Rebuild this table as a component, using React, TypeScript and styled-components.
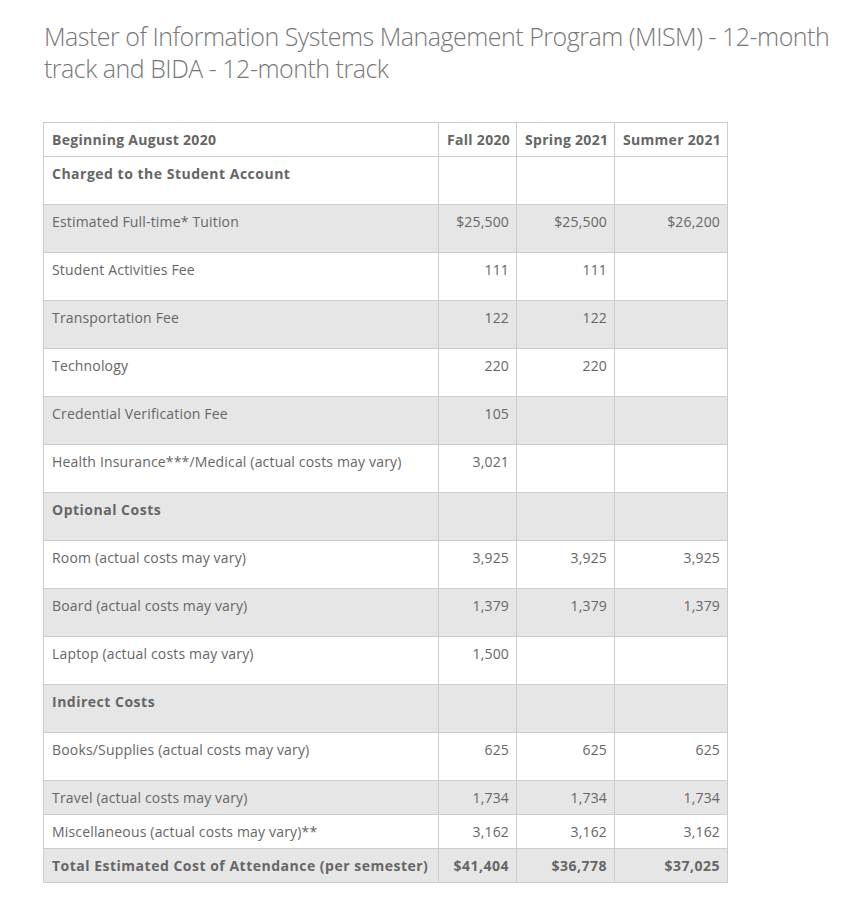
import React from "react";
import styled, { createGlobalStyle } from "styled-components";

const Global = createGlobalStyle`
  html, body { margin: 0; padding: 0; background: #fff; }
  body { font-family: "Open Sans", "Liberation Sans", sans-serif; color: #666; }
`;

const Page = styled.div`
  padding: 20px 0 0 43px;
  width: 800px;
`;

const Title = styled.h2`
  margin: 0 0 38px 1px;
  font-weight: 300;
  font-size: 25px;
  line-height: 32px;
  color: #777;
  letter-spacing: -0.5px;
`;

const Table = styled.table`
  border-collapse: collapse;
  table-layout: fixed;
  width: 685px;
  font-size: 14px;
  line-height: 17px;
`;

const Col = styled.col<{ $w: number }>`
  width: ${(p) => p.$w}px;
`;

const Row = styled.tr<{ $shade: boolean }>`
  background: ${(p) => (p.$shade ? "#e6e6e6" : "#fff")};
`;

const Cell = styled.td<{ $num?: boolean; $bold?: boolean; $tall?: boolean; $head?: boolean }>`
  border: 1px solid #ccc;
  padding: 8px 7px ${(p) => (p.$tall ? "22px" : "8px")} 8px;
  text-align: ${(p) => (p.$num ? "right" : "left")};
  font-weight: ${(p) => (p.$bold ? 700 : 400)};
  letter-spacing: ${(p) => (p.$head ? "0.3px" : p.$bold ? "0.5px" : "0.17px")};
  vertical-align: top;
  color: #666;
  white-space: nowrap;
  overflow: visible;
`;

type R = { label: string; v: string[]; bold?: boolean; tall?: boolean };

const rows: R[] = [
  { label: "Charged to the Student Account", v: ["", "", ""], bold: true, tall: true },
  { label: "Estimated Full-time* Tuition", v: ["$25,500", "$25,500", "$26,200"], tall: true },
  { label: "Student Activities Fee", v: ["111", "111", ""], tall: true },
  { label: "Transportation Fee", v: ["122", "122", ""], tall: true },
  { label: "Technology", v: ["220", "220", ""], tall: true },
  { label: "Credential Verification Fee", v: ["105", "", ""], tall: true },
  { label: "Health Insurance***/Medical (actual costs may vary)", v: ["3,021", "", ""], tall: true },
  { label: "Optional Costs", v: ["", "", ""], bold: true, tall: true },
  { label: "Room (actual costs may vary)", v: ["3,925", "3,925", "3,925"], tall: true },
  { label: "Board (actual costs may vary)", v: ["1,379", "1,379", "1,379"], tall: true },
  { label: "Laptop (actual costs may vary)", v: ["1,500", "", ""], tall: true },
  { label: "Indirect Costs", v: ["", "", ""], bold: true, tall: true },
  { label: "Books/Supplies (actual costs may vary)", v: ["625", "625", "625"], tall: true },
  { label: "Travel (actual costs may vary)", v: ["1,734", "1,734", "1,734"] },
  { label: "Miscellaneous (actual costs may vary)**", v: ["3,162", "3,162", "3,162"] },
  { label: "Total Estimated Cost of Attendance (per semester)", v: ["$41,404", "$36,778", "$37,025"], bold: true },
];

export default function App() {
  return (
    <>
      <Global />
      <Page>
        <Title>
          Master of Information Systems Management Program (MISM) - 12-month track and BIDA - 12-month track
        </Title>
        <Table>
          <colgroup>
            <Col $w={395} />
            <Col $w={78} />
            <Col $w={98} />
            <Col $w={113} />
          </colgroup>
          <tbody>
            <Row $shade={false}>
              <Cell $bold $head>Beginning August 2020</Cell>
              <Cell $bold $head $num>Fall 2020</Cell>
              <Cell $bold $head $num>Spring 2021</Cell>
              <Cell $bold $head $num>Summer 2021</Cell>
            </Row>
            {rows.map((r, i) => (
              <Row key={r.label} $shade={i % 2 === 1}>
                <Cell $bold={r.bold} $tall={r.tall}>{r.label}</Cell>
                {r.v.map((x, j) => (
                  <Cell key={j} $num $bold={r.bold} $tall={r.tall}>{x}</Cell>
                ))}
              </Row>
            ))}
          </tbody>
        </Table>
      </Page>
    </>
  );
}
